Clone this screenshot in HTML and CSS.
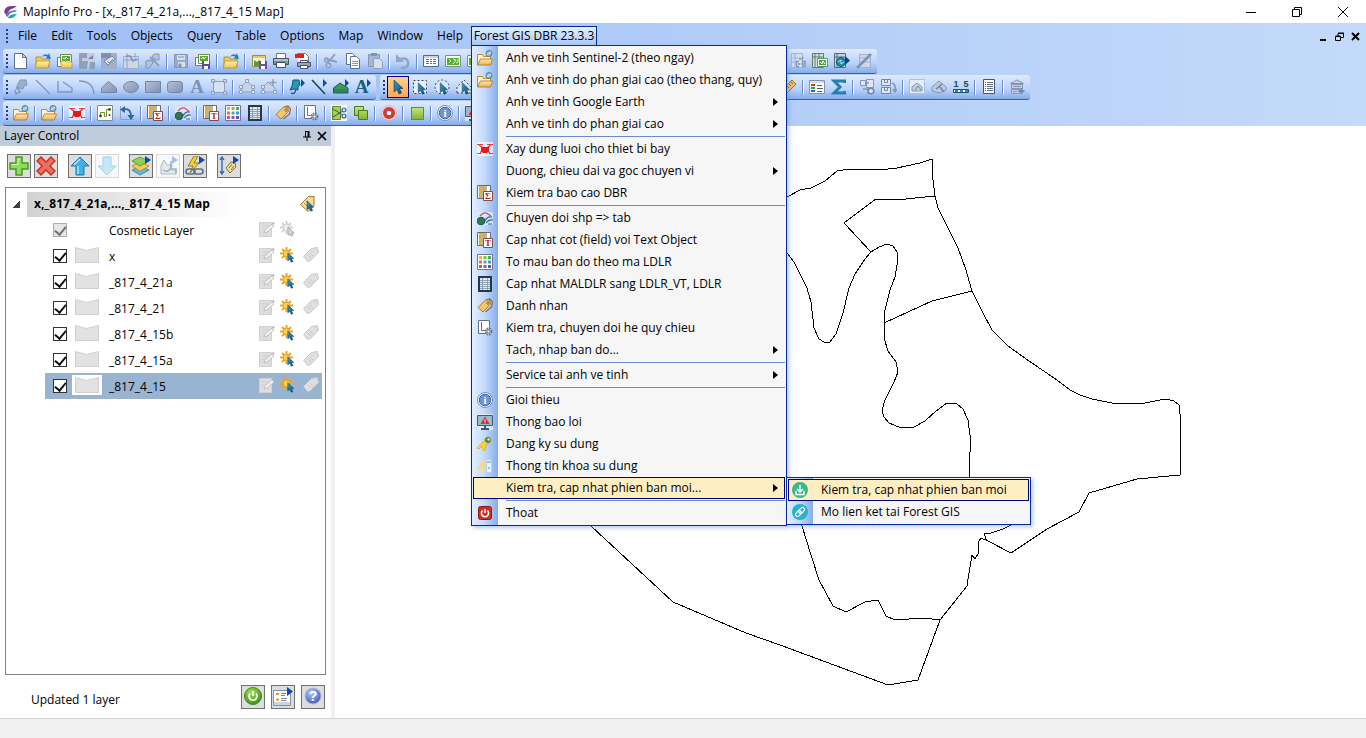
FILE: index.html
```html
<!DOCTYPE html>
<html lang="vi">
<head>
<meta charset="utf-8">
<title>MapInfo Pro - [x,_817_4_21a,...,_817_4_15 Map]</title>
<link rel="stylesheet" href="styles.css">
</head>
<body>
<svg class="defs" aria-hidden="true">
<defs>
<linearGradient id="g-gold" x1="0" y1="0" x2="0" y2="1"><stop offset="0" stop-color="#fff6a8"/><stop offset="1" stop-color="#ecc24a"/></linearGradient>
<linearGradient id="g-orange" x1="0" y1="0" x2="0" y2="1"><stop offset="0" stop-color="#ffe6b4"/><stop offset="1" stop-color="#eeb258"/></linearGradient>
<linearGradient id="g-teal" x1="0" y1="0" x2="1" y2="1"><stop offset="0" stop-color="#3aa0c4"/><stop offset="1" stop-color="#0d4a6e"/></linearGradient>
<linearGradient id="g-gray" x1="0" y1="0" x2="1" y2="1"><stop offset="0" stop-color="#b4c2da"/><stop offset="1" stop-color="#7f90b0"/></linearGradient>
<linearGradient id="g-green" x1="0" y1="0" x2="0" y2="1"><stop offset="0" stop-color="#c4e67c"/><stop offset="1" stop-color="#7fb431"/></linearGradient>
<radialGradient id="g-ball" cx=".4" cy=".3" r=".8"><stop offset="0" stop-color="#a8e05a"/><stop offset="1" stop-color="#2f8a10"/></radialGradient>
<radialGradient id="g-blueball" cx=".4" cy=".3" r=".8"><stop offset="0" stop-color="#b4c8f8"/><stop offset="1" stop-color="#3450b4"/></radialGradient>
</defs>
<symbol id="cursor" viewBox="0 0 16 16"><path d="M4 1v12l3-2.500 2 4.500 2.500-1-2-4.500h3.500z" fill="url(#g-teal)" stroke="#0d3550" stroke-width=".6"/></symbol>
<symbol id="new" viewBox="0 0 16 16"><path d="M1.500.500h8l4 4v11h-12z" fill="#fff" stroke="#5c7390"/><path d="M9.500.500v4h4z" fill="#c9d6e8" stroke="#5c7390"/></symbol>
<symbol id="open" viewBox="0 0 16 16"><path d="M1 14V4h5l1 2h7v8z" fill="#f0cf58" stroke="#a98024" stroke-width=".8"/><path d="M0 15l2-7h13l-2 7z" fill="url(#g-gold)" stroke="#b98f2c" stroke-width=".8"/><path d="M7 4q2-4 6-2l1-2 2 6-5-.500 1-2q-2-1-5 .500z" fill="#2583b4"/></symbol>
<symbol id="openws" viewBox="0 0 16 16"><path d="M.500 4.500h9v9h-9z" fill="#fff" stroke="#777"/><path d="M3.500 1.500h11v8h-11z" fill="#fff" stroke="#6d8c50"/><path d="M5 3h8v5H5z" fill="#58a832"/><path d="M6 5l2 1 1-2 2 2" stroke="#fff" fill="none"/><path d="M4 15V8h4l1 1h6v6z" fill="url(#g-gold)" stroke="#b98f2c" stroke-width=".7"/></symbol>
<symbol id="gdark1" viewBox="0 0 16 16"><path d="M0 0h16v16H0z" fill="#8f9fbc"/><path d="M8 0h8v9h-5l-1 7H8l1-8H3V5h5z" fill="#c3cfe2"/><path d="M9 6l5-4v4z" fill="#7485a5"/></symbol>
<symbol id="gdark2" viewBox="0 0 16 16"><path d="M0 0h16v16H0z" fill="#9fb0cb"/><path d="M0 0h10v5H0z" fill="#7f90b0"/><path d="M3 8l4 4 7-6-3-3z" fill="#dde6f3" stroke="#7384a5"/><path d="M6 8l2 2 4-4" stroke="#7384a5" fill="none"/></symbol>
<symbol id="gtable" viewBox="0 0 16 16"><path d="M.500 3.500h15v12H.500z" fill="#ccd7e8" stroke="#9fb0cb"/><path d="M4 0v16M12 0v5M1 7h14" stroke="#92a3c0"/><path d="M3 3h4l3 5 4-2" stroke="#8192b1" fill="none" stroke-width="1.500"/></symbol>
<symbol id="gtools" viewBox="0 0 16 16"><path d="M2 14L11 5M14 13L5 4" stroke="#8fa0be" stroke-width="2"/><path d="M9 1h5v6h-3l-4-3zM1 8l5-1 2 3-4 5H1z" fill="#b6c4da" stroke="#8495b4"/></symbol>
<symbol id="gsave" viewBox="0 0 16 16"><path d="M1.500 1.500h13v13h-13z" fill="#9aabc8" stroke="#8495b4"/><path d="M4 2h8v5H4zM5 9h7v5H5z" fill="#d6e0ee"/><path d="M5 4h6M6 11h2v3H6z" stroke="#8495b4" fill="#8495b4"/></symbol>
<symbol id="savews" viewBox="0 0 16 16"><path d="M.500 4.500h9v8h-9z" fill="#fff" stroke="#777"/><path d="M3.500 1.500h11v9h-11z" fill="#fff" stroke="#6d8c50"/><path d="M5 3h8v5H5z" fill="#58a832"/><path d="M6 6l2-2 1 2 2-2" stroke="#fff" fill="none"/><path d="M7 8h8v8H7z" fill="#574a9b"/><path d="M9 8h5v3H9zM9 13h4v3H9z" fill="#fff"/></symbol>
<symbol id="savewin" viewBox="0 0 16 16"><path d="M1.500 2.500h13v11h-13z" fill="#fff5d4" stroke="#a58a48"/><path d="M2 3h12v2H2z" fill="#e4c674"/><path d="M3 7l3 2 2-2 3 3v3H3z" fill="#4fa03c"/><path d="M8 8h8v8H8z" fill="#6c50a0"/><path d="M10 8h4v3h-4zM10 13h4v3h-4z" fill="#fff"/></symbol>
<symbol id="print" viewBox="0 0 16 16"><path d="M3.500 5V.500h9V5" fill="#fff" stroke="#6b7687"/><path d="M.500 5.500h15v6H.500z" fill="#7d899b" stroke="#465264"/><path d="M1 6h14v2H1z" fill="#b2bfd0"/><path d="M3.500 9.500h9v5h-9z" fill="#fff" stroke="#465264"/><path d="M12 9h3" stroke="#4fd04a" stroke-width="1.500"/></symbol>
<symbol id="pdf" viewBox="0 0 16 16"><path d="M2.500 4V.500h8l3 3V15h-8" fill="#fff" stroke="#777"/><path d="M0 1h9v4H0z" fill="#dc2020"/><path d="M2.500 9.500h13v4h-13z" fill="#9aa6b7" stroke="#465264"/><path d="M5.500 7.500h7v2h-7zM5.500 12.500h7v3h-7z" fill="#fff" stroke="#465264"/></symbol>
<symbol id="gcut" viewBox="0 0 16 16"><path d="M12 1L5 10M3 6l11 3" stroke="#8fa0be" stroke-width="2"/><circle cx="3.500" cy="7" r="2" fill="none" stroke="#8fa0be" stroke-width="1.500"/><circle cx="5.500" cy="12.500" r="2.300" fill="none" stroke="#8fa0be" stroke-width="1.500"/></symbol>
<symbol id="copy" viewBox="0 0 16 16"><path d="M1.500.500h6l3 3v8h-9z" fill="#fff" stroke="#5c7390"/><path d="M5.500 3.500h6l3 3v9h-9z" fill="#fff" stroke="#5c7390"/><path d="M7 8.500h6M7 10.500h6M7 12.500h6" stroke="#8aa0bd"/></symbol>
<symbol id="gpaste" viewBox="0 0 16 16"><path d="M1.500 1.500h11v12h-11z" fill="#a8b7d0" stroke="#8495b4"/><path d="M4 0h6v3H4z" fill="#8495b4"/><path d="M6.500 5.500h6l3 3v7h-9z" fill="#d6e0ee" stroke="#8fa0be"/></symbol>
<symbol id="gundo" viewBox="0 0 16 16"><path d="M6 15q8 0 7-6-1-5-8-3" fill="none" stroke="#93a5c4" stroke-width="2.500"/><path d="M1 1v8h8z" fill="#93a5c4"/></symbol>
<symbol id="browser" viewBox="0 0 16 16"><path d="M.500 2.500h15v11H.500z" fill="#fff" stroke="#4d6c8c"/><path d="M1 3h14v2H1z" fill="#c2d5ea"/><path d="M3 6.500h3M7 6.500h2M10 6.500h3M3 8.500h3M7 8.500h2M10 8.500h3M3 10.500h3M7 10.500h2M10 10.500h3" stroke="#4a7cae"/></symbol>
<symbol id="mapwin" viewBox="0 0 16 16"><path d="M.500 2.500h15v11H.500z" fill="#fff" stroke="#7c8f80"/><path d="M2 5h12v7H2z" fill="#54b032"/><path d="M4 6l2 2-2 2M8 6l3 1-3 4M13 6v3l-2 1" stroke="#e4f6dc" fill="none"/></symbol>
<symbol id="gpin" viewBox="0 0 16 16"><path d="M7 1h6l1 5-3 1-1 3-4-1-3 1 2-5z" fill="#9eafcc" stroke="#8596b5"/><path d="M4 8l3 5-4 2-1-4" fill="none" stroke="#8596b5" stroke-width="1.500"/></symbol>
<symbol id="gline" viewBox="0 0 16 16"><path d="M1 1l14 14" stroke="#8596b5" stroke-width="1.300"/></symbol>
<symbol id="gpoly" viewBox="0 0 16 16"><path d="M1 2v11h14V9L6 3" stroke="#8596b5" stroke-width="1.300" fill="none"/></symbol>
<symbol id="garc" viewBox="0 0 16 16"><path d="M0 2q14 0 15 13" stroke="#8596b5" stroke-width="1.300" fill="none"/></symbol>
<symbol id="gpent" viewBox="0 0 16 16"><path d="M.500 9L7.500 2.500l8 6.500v4.500h-15z" fill="url(#g-gray)" stroke="#7485a5"/></symbol>
<symbol id="gell" viewBox="0 0 16 16"><ellipse cx="8" cy="8" rx="7.500" ry="5.500" fill="url(#g-gray)" stroke="#7485a5"/></symbol>
<symbol id="grect" viewBox="0 0 16 16"><path d="M.500 2.500h15v11H.500z" fill="url(#g-gray)" stroke="#7485a5"/></symbol>
<symbol id="grrect" viewBox="0 0 16 16"><rect x=".500" y="2.500" width="15" height="11" rx="3" fill="url(#g-gray)" stroke="#7485a5"/></symbol>
<symbol id="gframe" viewBox="0 0 16 16"><path d="M2.500 2.500h11v11h-11z" fill="#d5e2f5" stroke="#8fa0be"/><path d="M.500.500h3v3h-3zM12.500.500h3v3h-3zM.500 12.500h3v3h-3zM12.500 12.500h3v3h-3z" fill="#c4d2e8" stroke="#8fa0be"/></symbol>
<symbol id="greshape" viewBox="0 0 16 16"><path d="M2 13V8l6-6 6 6v5z" fill="#c4d4ec" stroke="#8fa0be"/><path d="M.500 11.500h3v3h-3zM12.500 11.500h3v3h-3zM.500 6.500h3v3h-3zM12.500 6.500h3v3h-3zM6.500.500h3v3h-3z" fill="#dbe6f5" stroke="#8fa0be"/></symbol>
<symbol id="gaddnode" viewBox="0 0 16 16"><path d="M2 13V8l5-5 7 6v4z" fill="#c4d4ec" stroke="#8fa0be"/><path d="M.500 11.500h3v3h-3zM12.500 11.500h3v3h-3zM.500 6.500h3v3h-3z" fill="#dbe6f5" stroke="#8fa0be"/><path d="M12 0v7M8.500 3.500h7" stroke="#8fa0be" stroke-width="1.500"/></symbol>
<symbol id="pin" viewBox="0 0 16 16"><path d="M4 1h6l1 5-2 2v3l-4-1-4 1 2-4z" fill="#2a95b4" stroke="#0f5c7c"/><path d="M2 14q4 2 5-4" fill="none" stroke="#0f5c7c" stroke-width="1.300"/><path d="M12 0v8l4-4z" fill="#0a49b0"/></symbol>
<symbol id="line" viewBox="0 0 16 16"><path d="M1 1l13 14" stroke="#154a63" stroke-width="1.600"/><path d="M12 0v8l4-4z" fill="#0a49b0"/></symbol>
<symbol id="region" viewBox="0 0 16 16"><path d="M.500 14V9L7 4l8 5v5z" fill="#3f9a50" stroke="#155a6c"/><path d="M1 14v-4h14v4z" fill="#1b6b73" opacity=".5"/><path d="M12 0v8l4-4z" fill="#0a49b0"/></symbol>
<symbol id="more-mark" viewBox="0 0 16 16"><path d="M12 0v8l4-4z" fill="#0a49b0"/></symbol>
<symbol id="selrect" viewBox="0 0 16 16"><path d="M1.500 1.500h13v13h-13z" fill="#e5f0ff" stroke="#33465e" stroke-dasharray="2 2"/><use href="#cursor" x="3" y="3" width="13" height="13"/></symbol>
<symbol id="selcirc" viewBox="0 0 16 16"><circle cx="8" cy="8" r="7" fill="#d7e8fb" stroke="#33465e" stroke-dasharray="2 2"/><use href="#cursor" x="3" y="3" width="13" height="13"/></symbol>
<symbol id="selpoly" viewBox="0 0 16 16"><path d="M1 14V8l7-7 7 7v6z" fill="#d7e8fb" stroke="#33465e" stroke-dasharray="2 2"/><use href="#cursor" x="3" y="3" width="13" height="13"/></symbol>
<symbol id="gdb" viewBox="0 0 16 16"><path d="M1.500.500h11v14h-11z" fill="#d3deee" stroke="#a4b4ce"/><path d="M2 5h10M2 9h4M5 1v13" stroke="#a4b4ce"/><path d="M9 8.500H6.500v5H9M12 8.500h3v5h-3M8 11h2M11 11h3M10 5v2M13 4l-1 3" fill="none" stroke="#8596b5" stroke-width="1.400"/></symbol>
<symbol id="dbmap" viewBox="0 0 16 16"><path d="M.500.500h11v14H.500z" fill="#d6e3d9" stroke="#5d7d6b"/><path d="M0 4h11M3 0v14M7 0v5" stroke="#5d7d6b"/><path d="M5.500 5.500h10v8h-10z" fill="#fff" stroke="#58a078"/><path d="M7 7h7v5H7z" fill="#4cae28"/><path d="M8 9l2 2 1-3 2 3" stroke="#fff" fill="none"/></symbol>
<symbol id="dblink" viewBox="0 0 16 16"><path d="M.500.500h11v14H.500z" fill="#c5d5da" stroke="#4d6d7b"/><path d="M0 4h11M3 0v14" stroke="#4d6d7b"/><circle cx="7" cy="9" r="4.500" fill="#1f8db0" stroke="#0a5478"/><path d="M4 9l3-2v4l3-2" stroke="#bfe6f0" fill="none"/><path d="M11 3v9l5-4.500z" fill="#0a3f9c"/></symbol>
<symbol id="gslash" viewBox="0 0 16 16"><path d="M3.500 1.500h11v13h-11z" fill="#cdd9ea" stroke="#9fb0cb"/><path d="M4 5h10M4 9h10" stroke="#9fb0cb"/><path d="M1 15L15 1" stroke="#8192b1" stroke-width="2.500"/></symbol>
<symbol id="ruler" viewBox="0 0 16 16"><path d="M1 11L11 1l4 4L5 15z" fill="#f2c25c" stroke="#a5711e"/><path d="M4 9l2 2M6 7l2 2M8 5l2 2M10 3l2 2" stroke="#8d5e15"/></symbol>
<symbol id="legend" viewBox="0 0 16 16"><path d="M.500 1.500h15v13H.500z" fill="#fff" stroke="#8393a8"/><path d="M1 2h14v2H1z" fill="#d1deee"/><path d="M2 5h4v2H2z" fill="#e03020"/><path d="M2 8h4v2H2z" fill="#2fa33c"/><path d="M2 11h4v2H2z" fill="#2d5fd0"/><path d="M8 6.500h5M8 9.500h6M8 12.500h5" stroke="#4d5d70"/></symbol>
<symbol id="sigma" viewBox="0 0 16 16"><path d="M13.500 4V2H3l6 6-6 6h10.500v-2" fill="none" stroke="#2580ae" stroke-width="3"/></symbol>
<symbol id="gsnap" viewBox="0 0 16 16"><path d="M1.500 1.500h5v5h-5zM7.500.500h7v8h-7z" fill="#dde8f6" stroke="#8596b5"/><path d="M4 10h5v5M10 4H6" stroke="#8596b5" fill="none" stroke-width="1.500"/><circle cx="12" cy="12" r="2.800" fill="#dde8f6" stroke="#7485a5" stroke-width="1.500"/></symbol>
<symbol id="gswap" viewBox="0 0 16 16"><path d="M.500.500h9v6h-9zM.500 8.500h9v6h-9zM3.500.500h3v3h-3zM3.500 8.500h3v3h-3z" fill="#dde8f6" stroke="#7485a5"/><path d="M11 4q4 1 3 8M12 10l2 3 2-3" stroke="#8596b5" fill="none" stroke-width="1.500"/></symbol>
<symbol id="gwin" viewBox="0 0 16 16"><path d="M.500.500h15v14H.500z" fill="#e3edf9" stroke="#b0bfd7"/><path d="M3 12V8l5-4 5 4v4z" fill="#c1cfe4" stroke="#8596b5"/><path d="M6 11l3-4 3 4" fill="none" stroke="#7485a5"/></symbol>
<symbol id="ghouse" viewBox="0 0 16 16"><path d="M1 8l7-6 7 6v3l-7 3-7-2z" fill="#bccbe2" stroke="#8596b5"/><path d="M5 10l6-5M8 7l5 6" stroke="#7485a5" stroke-width="1.500"/></symbol>
<symbol id="scale" viewBox="0 0 16 16"><path d="M.500 10.500h15v3H.500z" fill="#fff" stroke="#0f5a70"/><path d="M2 12h3M7 12h3M12 12h3" stroke="#0f5a70" stroke-width="1.500"/></symbol>
<symbol id="listdoc" viewBox="0 0 16 16"><path d="M2.500.500h11v14h-11z" fill="#fff" stroke="#3f5672"/><path d="M4 3.500h1M4 5.500h1M4 7.500h1M4 9.500h1M4 11.500h1" stroke="#c33"/><path d="M6 3.500h6M6 5.500h6M6 7.500h6M6 9.500h6M6 11.500h6" stroke="#5d6f86"/></symbol>
<symbol id="gbank" viewBox="0 0 16 16"><path d="M1.500 4.500L8 1l6.500 3.500zM2.500 5.500h11v4h-11zM2.500 10.500h8v4h-8z" fill="#c5d2e6" stroke="#8596b5"/><path d="M4 7.500h8M4 12.500h4" stroke="#8596b5"/><path d="M12.500 9v6M9.500 12h6" stroke="#7485a5" stroke-width="2"/></symbol>
<symbol id="folder" viewBox="0 0 16 16"><path d="M.500 14.500V4.500h5l1 2h7v8z" fill="#fff3cf" stroke="#c48a32"/><path d="M.500 15l3-6h12l-2 6z" fill="url(#g-orange)" stroke="#b57a22" stroke-width=".9"/><circle cx="12" cy="3.500" r="3" fill="#8fbbd0" stroke="#4b7f98"/><path d="M10 5l4-3" stroke="#e9f6fa"/></symbol>
<symbol id="drone" viewBox="0 0 16 16"><path d="M0 1h16v14H0z" fill="#fff" opacity=".6"/><path d="M0 3.500h6M10 3.500h6M0 12.500h4M12 12.500h4" stroke="#f04040" stroke-width="1.200"/><path d="M2 4l4 3-3 6M14 4l-4 3 3 6" stroke="#f03a3a" stroke-width="1.500" fill="none"/><path d="M4 6h8v4l-2 2H6l-2-2z" fill="#e81818"/></symbol>
<symbol id="route" viewBox="0 0 16 16"><path d="M.500.500h15v15H.500z" fill="#fff" stroke="#7f8c9a"/><path d="M3.500 11V7.500h4v4h2V4.500h3" fill="none" stroke="#6f8f2a"/><circle cx="3.500" cy="11" r="1.400" fill="#3b4f20"/><circle cx="12.500" cy="4.500" r="1.400" fill="#3b4f20"/><circle cx="12.500" cy="10" r="1" fill="#3b4f20"/></symbol>
<symbol id="turn" viewBox="0 0 16 16"><path d="M1.500 1v13.500H15" stroke="#90a2b5" fill="none"/><path d="M4 4.500q8-2 8 7" fill="none" stroke="#2b669c" stroke-width="1.700"/><path d="M1 4.500l5-3.500v7zM8.500 10l3.500 5 3.500-5z" fill="#2b669c"/></symbol>
<symbol id="columns" viewBox="0 0 16 16"><path d="M.500.500h13v13H.500z" fill="#fff" stroke="#6f6a66"/><path d="M2 1h2v12H2zM6 1h2v12H6z" fill="#e5a93e"/><path d="M5 0v13M9 0v13" stroke="#6f6a66"/><path d="M6.500 6.500h9v9h-9z" fill="#fff" stroke="#7c5050"/></symbol>
<symbol id="convert" viewBox="0 0 16 16"><path d="M0 2h16v13H0z" fill="#e3edf6" opacity=".7"/><circle cx="4" cy="11" r="3.800" fill="#2b7a4e" stroke="#23505c"/><path d="M3 6q4-5 8-2l3 2" stroke="#d25060" stroke-width="1.300" fill="none"/><path d="M8 11q2-5 7-4M9 13q3-4 7-3M11 14h4" stroke="#34699a" stroke-width="1.200" fill="none"/></symbol>
<symbol id="palette" viewBox="0 0 16 16"><path d="M.500.500h15v15H.500z" fill="#fff" stroke="#75729a"/><path d="M2 2h3v3H2z" fill="#eab64c"/><path d="M6.500 2h3v3h-3z" fill="#7bc043"/><path d="M11 2h3v3h-3z" fill="#4cae5c"/><path d="M2 6.500h3v3H2z" fill="#e2703c"/><path d="M6.500 6.500h3v3h-3z" fill="#3dae9c"/><path d="M11 6.500h3v3h-3z" fill="#3c9ad0"/><path d="M2 11h3v3H2z" fill="#d84890"/><path d="M6.500 11h3v3h-3z" fill="#9a50b4"/><path d="M11 11h3v3h-3z" fill="#6054b4"/></symbol>
<symbol id="sheet" viewBox="0 0 16 16"><path d="M1 0h14v16H1z" fill="#263746"/><path d="M3 2h10v12H3z" fill="#e2eaf2"/><path d="M3 4.500h10M3 6.500h10M3 8.500h10M3 10.500h10M3 12.500h10M5.500 2v12M10.500 2v12" stroke="#7a93a8" stroke-width=".8"/></symbol>
<symbol id="tag" viewBox="0 0 16 16"><path d="M9 2l4-1 2.500 3-1 5-6 5" fill="none" stroke="#8a6a4a" stroke-width="1.200"/><path d="M1 9.500l7.500-7.500h4l1 4-7.500 8z" fill="#f8c868" stroke="#b07a32" stroke-linejoin="round"/><circle cx="11" cy="5" r="1.200" fill="#fff" stroke="#8a5a20"/></symbol>
<symbol id="setup" viewBox="0 0 16 16"><path d="M1.500.500h11v13h-11z" fill="#fff" stroke="#60758c"/><path d="M4.500 2v8.500H9" fill="none" stroke="#60758c"/><circle cx="11.500" cy="11.500" r="3" fill="#d7e0ec" stroke="#66778f" stroke-width="2" stroke-dasharray="1.600 .8"/><circle cx="11.500" cy="11.500" r="1.500" fill="#fff" stroke="#66778f"/></symbol>
<symbol id="split" viewBox="0 0 16 16"><path d="M0 0h16v16H0z" fill="#fff"/><path d="M1.500 1.500h8v13h-8z" fill="#a8cf58" stroke="#5d8a24"/><path d="M2 4l10 6M2 12l10-6" stroke="#2f5a40"/><circle cx="13" cy="5" r="2" fill="#cfe2f8" stroke="#2e60a8" stroke-width="1.200"/><circle cx="13" cy="11" r="2" fill="#cfe2f8" stroke="#2e60a8" stroke-width="1.200"/></symbol>
<symbol id="merge" viewBox="0 0 16 16"><path d="M1.500 1.500h9v4h4v9h-9v-4h-4z" fill="url(#g-green)" stroke="#4e7a1a"/><path d="M5.500 10V5.500H10" fill="none" stroke="#4e7a1a"/></symbol>
<symbol id="record" viewBox="0 0 16 16"><circle cx="8" cy="8" r="7.500" fill="#f2d6dc" stroke="#d89aa4" stroke-width=".6"/><circle cx="8" cy="8" r="6" fill="#cc3b38"/><circle cx="8" cy="8" r="2.300" fill="#fff"/></symbol>
<symbol id="greensq" viewBox="0 0 16 16"><rect x="2.500" y="2.500" width="12" height="12" fill="url(#g-green)" stroke="#5f8f26"/></symbol>
<symbol id="info" viewBox="0 0 16 16"><circle cx="8" cy="8" r="7.500" fill="#fff" stroke="#7392c8"/><circle cx="8" cy="8" r="5.800" fill="#6f94d4" stroke="#3f65aa"/></symbol>
<symbol id="alertpc" viewBox="0 0 16 16"><path d="M0 0h16v16H0z" fill="#eef3f8" opacity=".7"/><path d="M.500 1.500h15v10H.500z" fill="#9bbad0" stroke="#47586a"/><path d="M8 2.500l4.500 7.500h-9z" fill="#d83030"/><path d="M8 5v3M8 8.500v1" stroke="#ffe9a0"/><path d="M8 12v2M4 15h8" stroke="#47586a" stroke-width="2"/></symbol>
<symbol id="key" viewBox="0 0 16 16"><path d="M8 4l4 3-3 2-1 6-2-1-1-4-3 3-2-1 5-5z" fill="#ffd535" stroke="#d7a418" stroke-width=".7"/><circle cx="11" cy="4" r="3.300" fill="#37787e" stroke="#e4bb29"/><circle cx="11.500" cy="3.500" r="1.200" fill="#d8eee8"/></symbol>
<symbol id="keyinfo" viewBox="0 0 16 16"><path d="M6 2l3 2-2 4 1 6-2 1-2-5-4 2 4-7z" fill="#fbd87a"/><path d="M9.500 1.500h5v13h-5z" fill="#e8f3ff" stroke="#b3d0ee"/><path d="M10 4h4M11 10h2" stroke="#7db4e4" stroke-width="1.500"/></symbol>
<symbol id="power" viewBox="0 0 16 16"><rect x="1.500" y="1.500" width="13" height="13" rx="2" fill="#cf2e24" stroke="#8d1812"/><path d="M5.500 5.500a3.600 3.600 0 1 0 5 0M8 4v4" fill="none" stroke="#fff" stroke-width="1.500"/></symbol>
<symbol id="download" viewBox="0 0 16 16"><circle cx="8" cy="8" r="8" fill="#3db88c"/><path d="M8 3v6M5 7l3 3 3-3M4 9v3.500h8V9" fill="none" stroke="#fff" stroke-width="1.400"/></symbol>
<symbol id="link" viewBox="0 0 16 16"><circle cx="8" cy="8" r="8" fill="#25b2cc"/><g fill="none" stroke="#fff" stroke-width="1.200"><rect x="2.500" y="6" width="6.500" height="4" rx="2" transform="rotate(-45 8 8)"/><rect x="7" y="6" width="6.500" height="4" rx="2" transform="rotate(-45 8 8)"/></g></symbol>
<symbol id="add" viewBox="0 0 20 20"><path d="M7 1h6v6h6v6h-6v6H7v-6H1V7h6z" fill="#8fdc5c" stroke="#449a22" stroke-width="1.500"/><path d="M8.500 3h3M3 8.500h6V3" stroke="#d8f7bd" fill="none"/></symbol>
<symbol id="remove" viewBox="0 0 20 20"><path d="M1 5l4-4 5 5 5-5 4 4-5 5 5 5-4 4-5-5-5 5-4-4 5-5z" fill="#f06c5e" stroke="#c42c22" stroke-width="1.300"/></symbol>
<symbol id="up" viewBox="0 0 20 20"><path d="M10 1l9 9h-5v9H6v-9H1z" fill="#3fb0ea" stroke="#1877b4"/><path d="M8 10v8M10 3L4 9" stroke="#b6e6fb" stroke-width="1.500"/></symbol>
<symbol id="down" viewBox="0 0 20 20"><path d="M10 19l9-9h-5V1H6v9H1z" fill="#c5e8f8" stroke="#a3d3e8"/></symbol>
<symbol id="layers" viewBox="0 0 20 20"><path d="M1 14l8-4 9 4-9 5z" fill="#5fb8dc" stroke="#3a8db4"/><path d="M1 10l8-4 9 4-9 5z" fill="#f6cb58" stroke="#c59423"/><path d="M1 5l8-4 9 4-9 5z" fill="#8fd05a" stroke="#5aa02c"/><path d="M14 0v8l6-4z" fill="#0a49b0"/></symbol>
<symbol id="ghand" viewBox="0 0 20 20"><path d="M3 18V10l3-6 3 5h4v5h5v4z" fill="#e4ebf0" stroke="#a9b9c5"/><path d="M5 14q6 4 9-5M13 5v8h5v5" fill="none" stroke="#9fb2c0" stroke-width="1.500"/><path d="M14 0v8l6-4z" fill="#a9c0e0"/></symbol>
<symbol id="hotlink" viewBox="0 0 20 20"><path d="M9 0L3 10h5l-3 7 9-10H9l4-7z" fill="#f5cf38" stroke="#7d6310" stroke-width=".8"/><rect x="1" y="13" width="9" height="5" rx="2.500" fill="none" stroke="#58708c" stroke-width="1.600"/><rect x="9" y="13" width="9" height="5" rx="2.500" fill="none" stroke="#58708c" stroke-width="1.600"/><path d="M14 0v8l6-4z" fill="#0a49b0"/></symbol>
<symbol id="labels" viewBox="0 0 20 20"><path d="M3 1v17M1 4l2-3 2 3M1 15l2 3 2-3" fill="none" stroke="#2565b8" stroke-width="1.300"/><path d="M7 12l5-6 4 1 1 4-6 6z" fill="#f0dda2" stroke="#83713c"/><path d="M10 12l3-4M12 14l3-4" stroke="#83713c"/><path d="M14 0v8l6-4z" fill="#0a49b0"/></symbol>
<symbol id="poly" viewBox="0 0 24 16"><path d="M.500.500l11 3L23.500.500v15H.500z" fill="#e2e2e2" stroke="#cfcfcf"/></symbol>
<symbol id="edit" viewBox="0 0 16 16"><path d="M.500 1.500h12v14H.500z" fill="#dedede" stroke="#d0d0d0"/><path d="M3 5h7M3 8h7M3 11h7" stroke="#cfcfcf"/><path d="M5 12l1-3 7-6 2 2-7 6z" fill="#f4f4f4" stroke="#c2c2c2"/><path d="M13.500 1.500l1.500 1.500" stroke="#b4b4b4" stroke-width="2"/></symbol>
<symbol id="sun" viewBox="0 0 16 16"><path d="M6.500 0v13M0 6.500h13M2 2l9 9M11 2l-9 9" stroke="#eda52c" stroke-width="2"/><circle cx="6.500" cy="6.500" r="3.500" fill="#ffcf50" stroke="#e8962a"/><use href="#cursor" x="5" y="5" width="11" height="11"/></symbol>
<symbol id="gsun" viewBox="0 0 16 16"><path d="M6.500 0v13M0 6.500h13M2 2l9 9M11 2l-9 9" stroke="#d3d3d3" stroke-width="2"/><circle cx="6.500" cy="6.500" r="3.500" fill="#eee" stroke="#ccc"/><path d="M8 6v8l2-1 1 2 2-1-1-2h2z" fill="#d7d7d7" stroke="#aaa"/></symbol>
<symbol id="gtag" viewBox="0 0 16 16"><path d="M.500 9.500l8-8 6-1 1 5-8 8-3 1z" fill="#e0e0e0" stroke="#c8c8c8" stroke-linejoin="round"/><path d="M5 8l3 3M7 6l3 3" stroke="#c4c4c4"/><circle cx="12.500" cy="3.500" r="1" fill="#fff" stroke="#bbb" stroke-width=".6"/></symbol>
<symbol id="maptag" viewBox="0 0 16 16"><path d="M.500 8.500l8-8h5.500v9l-6 6z" fill="#f6dc96" stroke="#9a7a36" stroke-linejoin="round"/><path d="M4 7l4 4M6 5l3 3" stroke="#b4924c"/><use href="#cursor" x="4" y="4" width="12" height="12"/></symbol>
<symbol id="on" viewBox="0 0 20 20"><circle cx="10" cy="9" r="8.500" fill="url(#g-ball)" stroke="#3b8c18"/><path d="M7 6.500a4 4 0 1 0 6 0M10 4v5" fill="none" stroke="#fff" stroke-width="1.800"/></symbol>
<symbol id="opts" viewBox="0 0 20 20"><path d="M.500 3.500h17v15H.500z" fill="#fff" stroke="#7c93b4"/><path d="M1 15h16v3H1z" fill="#c7d5e6"/><path d="M3 7h3M3 12.500h3" stroke="#e39a2c" stroke-width="2"/><path d="M8 6.500h5M8 8.500h4M8 11.500h6M8 13.500h5" stroke="#7d8694"/><path d="M14 0v9l6-4.500z" fill="#0a49b0"/></symbol>
<symbol id="help" viewBox="0 0 20 20"><circle cx="10" cy="9" r="8" fill="url(#g-blueball)" stroke="#a9b8e4"/></symbol>
<symbol id="logo" viewBox="0 0 14 14"><path d="M0 7Q1 1 7 1h6l-3 2Q4 4 3 11z" fill="#7d3c9c"/><path d="M2 11q1-6 11-6l-2 2Q5 7 4 12z" fill="#4a7fc4"/><path d="M4 13q1-4 9-4l-3 3q-3 2-6 1z" fill="#20a8a8"/></symbol>
</svg>

<header class="titlebar">
  <svg class="logo" aria-hidden="true"><use href="#logo"/></svg>
  <h1>MapInfo Pro - [x,_817_4_21a,...,_817_4_15 Map]</h1>
  <div class="window-controls">
    <button aria-label="Minimize"><svg viewBox="0 0 12 12"><path d="M1 6.500h10"/></svg></button>
    <button aria-label="Restore"><svg viewBox="0 0 12 12"><path d="M1.500 3.500h7v7h-7zM3.500 3V1.500h7v7H9"/></svg></button>
    <button aria-label="Close"><svg viewBox="0 0 12 12"><path d="M1 1l10 10M11 1L1 11"/></svg></button>
  </div>
</header>

<div class="chrome">
  <nav class="menubar" aria-label="Menu">
    <span class="grip"></span>
    <div class="menus">
      <button>File</button><button>Edit</button><button>Tools</button><button>Objects</button><button>Query</button><button>Table</button><button>Options</button><button>Map</button><button>Window</button><button>Help</button>
    </div>
    <div class="open-menu">
      <button class="tab" aria-expanded="true">Forest GIS DBR 23.3.3</button>
      <div class="dropdown">
        <button class="item"><svg><use href="#folder"/></svg>Anh ve tinh Sentinel-2 (theo ngay)</button>
        <button class="item"><svg><use href="#folder"/></svg>Anh ve tinh do phan giai cao (theo thang, quy)</button>
        <button class="item more"><svg></svg>Anh ve tinh Google Earth</button>
        <button class="item more"><svg></svg>Anh ve tinh do phan giai cao</button>
        <hr>
        <button class="item"><svg><use href="#drone"/></svg>Xay dung luoi cho thiet bi bay</button>
        <button class="item more"><svg></svg>Duong, chieu dai va goc chuyen vi</button>
        <button class="item"><svg viewBox="0 0 16 16"><use href="#columns"/><text x="11" y="14" class="mark">Σ</text></svg>Kiem tra bao cao DBR</button>
        <hr>
        <button class="item"><svg><use href="#convert"/></svg>Chuyen doi shp =&gt; tab</button>
        <button class="item"><svg viewBox="0 0 16 16"><use href="#columns"/><text x="11" y="14" class="mark">T</text></svg>Cap nhat cot (field) voi Text Object</button>
        <button class="item"><svg><use href="#palette"/></svg>To mau ban do theo ma LDLR</button>
        <button class="item"><svg><use href="#sheet"/></svg>Cap nhat MALDLR sang LDLR_VT, LDLR</button>
        <button class="item"><svg><use href="#tag"/></svg>Danh nhan</button>
        <button class="item"><svg><use href="#setup"/></svg>Kiem tra, chuyen doi he quy chieu</button>
        <button class="item more"><svg></svg>Tach, nhap ban do...</button>
        <hr>
        <button class="item more"><svg></svg>Service tai anh ve tinh</button>
        <hr>
        <button class="item"><svg viewBox="0 0 16 16"><use href="#info"/><text x="8" y="12" class="info-mark">i</text></svg>Gioi thieu</button>
        <button class="item"><svg><use href="#alertpc"/></svg>Thong bao loi</button>
        <button class="item"><svg><use href="#key"/></svg>Dang ky su dung</button>
        <button class="item"><svg><use href="#keyinfo"/></svg>Thong tin khoa su dung</button>
        <div class="branch">
          <button class="item more active"><svg></svg>Kiem tra, cap nhat phien ban moi...</button>
          <div class="dropdown submenu">
            <button class="item active"><svg><use href="#download"/></svg>Kiem tra, cap nhat phien ban moi</button>
            <button class="item"><svg><use href="#link"/></svg>Mo lien ket tai Forest GIS</button>
          </div>
        </div>
        <hr>
        <button class="item"><svg><use href="#power"/></svg>Thoat</button>
      </div>
    </div>
    <div class="child-controls">
      <button aria-label="Minimize map"><svg viewBox="0 0 9 9"><path d="M1 8h6" stroke-width="2"/></svg></button>
      <button aria-label="Restore map"><svg viewBox="0 0 9 9"><path d="M.500 4.500h5v4h-5zM3 4V1.500h5.500v4H6M.500 4h5M3 1h6"/></svg></button>
      <button aria-label="Close map"><svg viewBox="0 0 9 9"><path d="M1 1l7 7M8 1L1 8" stroke-width="2"/></svg></button>
    </div>
  </nav>

  <div class="toolbar-row">
    <div class="toolbar">
      <span class="grip"></span>
      <button aria-label="New"><svg><use href="#new"/></svg></button>
      <button aria-label="Open"><svg><use href="#open"/></svg></button>
      <button aria-label="Open workspace"><svg><use href="#openws"/></svg></button>
      <button aria-label="Open DBMS" disabled><svg><use href="#gdark1"/></svg></button>
      <button aria-label="Refresh" disabled><svg><use href="#gdark2"/></svg></button>
      <button aria-label="Unlink" disabled><svg><use href="#gtable"/></svg></button>
      <button aria-label="Universal tools" disabled><svg><use href="#gtools"/></svg></button>
      <i></i>
      <button aria-label="Save" disabled><svg><use href="#gsave"/></svg></button>
      <button aria-label="Save workspace"><svg><use href="#savews"/></svg></button>
      <i></i>
      <button aria-label="Close all"><svg><use href="#open"/></svg></button>
      <i></i>
      <button aria-label="Save window"><svg><use href="#savewin"/></svg></button>
      <button aria-label="Print"><svg><use href="#print"/></svg></button>
      <button aria-label="Print PDF"><svg><use href="#pdf"/></svg></button>
      <i></i>
      <button aria-label="Cut" disabled><svg><use href="#gcut"/></svg></button>
      <button aria-label="Copy"><svg><use href="#copy"/></svg></button>
      <button aria-label="Paste" disabled><svg><use href="#gpaste"/></svg></button>
      <i></i>
      <button aria-label="Undo" disabled><svg><use href="#gundo"/></svg></button>
      <i></i>
      <button aria-label="New browser"><svg><use href="#browser"/></svg></button>
      <button aria-label="New map"><svg><use href="#mapwin"/></svg></button>
      <button aria-label="New graph"><svg><use href="#mapwin"/></svg></button>
      <span class="spread"></span>
      <button aria-label="DBMS disconnect" disabled><svg><use href="#gdb"/></svg></button>
      <button aria-label="Make mappable"><svg><use href="#dbmap"/></svg></button>
      <button aria-label="Change symbol"><svg><use href="#dblink"/></svg></button>
      <button aria-label="Disconnect" disabled><svg><use href="#gslash"/></svg></button>
    </div>
  </div>

  <div class="toolbar-row">
    <div class="toolbar">
      <span class="grip"></span>
      <button aria-label="Symbol" disabled><svg><use href="#gpin"/></svg></button>
      <button aria-label="Line" disabled><svg><use href="#gline"/></svg></button>
      <button aria-label="Polyline" disabled><svg><use href="#gpoly"/></svg></button>
      <button aria-label="Arc" disabled><svg><use href="#garc"/></svg></button>
      <button aria-label="Polygon" disabled><svg><use href="#gpent"/></svg></button>
      <button aria-label="Ellipse" disabled><svg><use href="#gell"/></svg></button>
      <button aria-label="Rectangle" disabled><svg><use href="#grect"/></svg></button>
      <button aria-label="Rounded rectangle" disabled><svg><use href="#grrect"/></svg></button>
      <button aria-label="Text" class="letter" disabled>A</button>
      <button aria-label="Frame" disabled><svg><use href="#gframe"/></svg></button>
      <i></i>
      <button aria-label="Reshape" disabled><svg><use href="#greshape"/></svg></button>
      <button aria-label="Add node" disabled><svg><use href="#gaddnode"/></svg></button>
      <i></i>
      <button aria-label="Symbol style"><svg><use href="#pin"/></svg></button>
      <button aria-label="Line style"><svg><use href="#line"/></svg></button>
      <button aria-label="Region style"><svg><use href="#region"/></svg></button>
      <button aria-label="Text style" class="letter styled">A<svg><use href="#more-mark"/></svg></button>
    </div>
    <div class="toolbar">
      <span class="grip"></span>
      <button aria-label="Select" class="pressed"><svg><use href="#cursor"/></svg></button>
      <button aria-label="Marquee select"><svg><use href="#selrect"/></svg></button>
      <button aria-label="Radius select"><svg><use href="#selcirc"/></svg></button>
      <button aria-label="Polygon select"><svg><use href="#selpoly"/></svg></button>
      <span class="spread"></span>
      <button aria-label="Ruler"><svg><use href="#ruler"/></svg></button>
      <i></i>
      <button aria-label="Legend"><svg><use href="#legend"/></svg></button>
      <button aria-label="Statistics"><svg><use href="#sigma"/></svg></button>
      <i></i>
      <button aria-label="Set target" disabled><svg><use href="#gsnap"/></svg></button>
      <button aria-label="Assign selected" disabled><svg><use href="#gswap"/></svg></button>
      <i></i>
      <button aria-label="Clip region" disabled><svg><use href="#gwin"/></svg></button>
      <button aria-label="Set clip region" disabled><svg><use href="#ghouse"/></svg></button>
      <button aria-label="Scale bar"><svg viewBox="0 0 16 16"><use href="#scale"/><text x="3" y="8" class="digit">1</text><text x="13" y="8" class="digit">5</text></svg></button>
      <i></i>
      <button aria-label="Tool manager"><svg><use href="#listdoc"/></svg></button>
      <i></i>
      <button aria-label="Catalog" disabled><svg><use href="#gbank"/></svg></button>
    </div>
  </div>

  <div class="toolbar-row">
    <div class="toolbar">
      <span class="grip"></span>
      <button aria-label="Sentinel-2"><svg><use href="#folder"/></svg></button><i></i>
      <button aria-label="High resolution"><svg><use href="#folder"/></svg></button><i></i>
      <button aria-label="Drone grid"><svg><use href="#drone"/></svg></button><i></i>
      <button aria-label="Route"><svg><use href="#route"/></svg></button>
      <button aria-label="Turn angle"><svg><use href="#turn"/></svg></button><i></i>
      <button aria-label="Check report"><svg viewBox="0 0 16 16"><use href="#columns"/><text x="11" y="14" class="mark">Σ</text></svg></button><i></i>
      <button aria-label="Convert"><svg><use href="#convert"/></svg></button><i></i>
      <button aria-label="Update column"><svg viewBox="0 0 16 16"><use href="#columns"/><text x="11" y="14" class="mark">T</text></svg></button>
      <button aria-label="Colour map"><svg><use href="#palette"/></svg></button>
      <button aria-label="Update codes"><svg><use href="#sheet"/></svg></button><i></i>
      <button aria-label="Label"><svg><use href="#tag"/></svg></button><i></i>
      <button aria-label="Projection"><svg><use href="#setup"/></svg></button><i></i>
      <button aria-label="Split"><svg><use href="#split"/></svg></button>
      <button aria-label="Merge"><svg><use href="#merge"/></svg></button><i></i>
      <button aria-label="Record"><svg><use href="#record"/></svg></button><i></i>
      <button aria-label="Area"><svg><use href="#greensq"/></svg></button><i></i>
      <button aria-label="About"><svg viewBox="0 0 16 16"><use href="#info"/><text x="8" y="12" class="info-mark">i</text></svg></button><i></i>
      <button aria-label="Report error"><svg><use href="#alertpc"/></svg></button>
      <button aria-label="Register"><svg><use href="#key"/></svg></button>
    </div>
  </div>
</div>

<main class="workspace">
  <aside class="layer-panel">
    <header class="panel-head">
      <h2>Layer Control</h2>
      <button aria-label="Auto hide"><svg viewBox="0 0 10 10"><path d="M3 .500h4M3.500 0v6M1 6h8M5 6v4"/><path d="M6.500 0v6" stroke-width="2"/></svg></button>
      <button aria-label="Close panel"><svg viewBox="0 0 10 10"><path d="M1 1l8 8M9 1L1 9" stroke-width="1.700"/></svg></button>
    </header>
    <div class="panel-tools">
      <div><button aria-label="Add layers"><svg><use href="#add"/></svg></button><button aria-label="Remove layer"><svg><use href="#remove"/></svg></button></div>
      <div><button aria-label="Move up"><svg><use href="#up"/></svg></button><button aria-label="Move down" disabled><svg><use href="#down"/></svg></button></div>
      <div><button aria-label="Layer properties"><svg><use href="#layers"/></svg></button><button aria-label="Theme properties" disabled><svg><use href="#ghand"/></svg></button><button aria-label="HotLinks"><svg><use href="#hotlink"/></svg></button></div>
      <div><button aria-label="Label options"><svg><use href="#labels"/></svg></button></div>
    </div>
    <section class="tree">
      <div class="tree-head">
        <span class="twisty"></span>
        <strong>x,_817_4_21a,...,_817_4_15 Map</strong>
        <svg><use href="#maptag"/></svg>
      </div>
      <div class="row"><input type="checkbox" id="l0" checked disabled><span class="swatch"></span><label for="l0">Cosmetic Layer</label><svg><use href="#edit"/></svg><svg><use href="#gsun"/></svg><svg></svg></div>
      <div class="row"><input type="checkbox" id="l1" checked><span class="swatch"><svg><use href="#poly"/></svg></span><label for="l1">x</label><svg><use href="#edit"/></svg><svg><use href="#sun"/></svg><svg><use href="#gtag"/></svg></div>
      <div class="row"><input type="checkbox" id="l2" checked><span class="swatch"><svg><use href="#poly"/></svg></span><label for="l2">_817_4_21a</label><svg><use href="#edit"/></svg><svg><use href="#sun"/></svg><svg><use href="#gtag"/></svg></div>
      <div class="row"><input type="checkbox" id="l3" checked><span class="swatch"><svg><use href="#poly"/></svg></span><label for="l3">_817_4_21</label><svg><use href="#edit"/></svg><svg><use href="#sun"/></svg><svg><use href="#gtag"/></svg></div>
      <div class="row"><input type="checkbox" id="l4" checked><span class="swatch"><svg><use href="#poly"/></svg></span><label for="l4">_817_4_15b</label><svg><use href="#edit"/></svg><svg><use href="#sun"/></svg><svg><use href="#gtag"/></svg></div>
      <div class="row"><input type="checkbox" id="l5" checked><span class="swatch"><svg><use href="#poly"/></svg></span><label for="l5">_817_4_15a</label><svg><use href="#edit"/></svg><svg><use href="#sun"/></svg><svg><use href="#gtag"/></svg></div>
      <div class="row selected"><input type="checkbox" id="l6" checked><span class="swatch"><svg><use href="#poly"/></svg></span><label for="l6">_817_4_15</label><svg><use href="#edit"/></svg><svg><use href="#sun"/></svg><svg><use href="#gtag"/></svg></div>
    </section>
    <footer class="panel-foot">
      <span>Updated 1 layer</span>
      <button aria-label="Auto apply"><svg><use href="#on"/></svg></button>
      <button aria-label="Options"><svg><use href="#opts"/></svg></button>
      <button aria-label="Help"><svg viewBox="0 0 20 20"><use href="#help"/><text x="10" y="14" class="help-mark">?</text></svg></button>
    </footer>
  </aside>
  <section class="map" aria-label="Map">
    <svg viewBox="335 126 1031 592" preserveAspectRatio="xMinYMin slice">
      <g fill="none" stroke="#000" stroke-width="1" shape-rendering="crispEdges">
        <path d="M780 200L787 197L800 190L811 188L825 181L837 171L850 169L879 170L897 168L920 163L932 159L933 180L935 196L938 208L948 228L958 248L966 270L972 291L982 311L992 330L1008 346L1029 361L1057 380L1070 390L1080 395L1092 399L1112 403L1145 403L1160 400L1166 399L1174 401L1179 405L1181 422L1180 440L1180 475L1137 479L1089 493L1079 512L1047 529L1011 553L988 541L981 538L978 543L979 552L975 559L972 555L969 573L967 586L940 620L918 680L888 685L780 645L746 633L673 602L591 526L570 505"/>
        <path d="M780 246L787 253L794 262L807 288L811 302L814 328L819 339L824 342L830 342L836 334L843 313L849 288L855 274L865 259L871 252L879 247L887 244L893 246L897 252L897 265L895 277L890 290L885 310L884 323L884 338L888 351L896 362L898 372L894 382L885 400L882 410L884 417L889 423L901 428L914 427L925 421L936 411L947 403L956 403L963 409L968 420L970 435L970 452L969 465L970 480"/>
        <path d="M935 196L896 200L876 199L844 223L871 252M884 323L932 301L972 291"/>
        <path d="M800 520L802 526L811 555L819 580L833 606L846 612L865 602L878 600L886 616L895 620L924 618L940 620M1015 522L1011 525L1003 529L991 533L984 534L987 541"/>
      </g>
    </svg>
  </section>
</main>
<footer class="statusbar"></footer>
</body>
</html>
```
FILE: styles.css
```css
* { box-sizing: border-box; }
html, body { height: 100%; }
body {
  margin: 0;
  display: flex;
  flex-direction: column;
  background: #fff;
  color: #000;
  font: 12px/16px "Open Sans", "Noto Sans", sans-serif;
  overflow: hidden;
}
button {
  margin: 0;
  padding: 0;
  border: 0;
  background: none;
  color: inherit;
  font: inherit;
}
h1, h2 { margin: 0; font-size: 12px; font-weight: 400; white-space: nowrap; }
svg { display: block; flex: none; }
.defs { position: absolute; width: 0; height: 0; }
.mark { font: 700 9px "Liberation Serif", serif; text-anchor: middle; fill: #c81616; }
.info-mark { font: 700 11px "Liberation Serif", serif; text-anchor: middle; fill: #fff; }
.help-mark { font: 700 14px "Liberation Sans", sans-serif; text-anchor: middle; fill: #fff; }
.digit { font: 700 9px "Liberation Sans", sans-serif; text-anchor: middle; fill: #0f4f68; }

.titlebar { flex: none; display: flex; align-items: center; height: 23px; padding-left: 4px; }
.titlebar h1 { flex: 1; padding-left: 5px; }
.logo { width: 14px; height: 14px; }
.window-controls { display: flex; }
.window-controls button { width: 46px; height: 21px; display: grid; place-items: center; }
.window-controls svg { width: 12px; height: 12px; fill: none; stroke: #000; }

.chrome { flex: none; background: linear-gradient(90deg, #9ebef5, #c4dafa); }
.grip {
  flex: none;
  width: 2px;
  height: 15px;
  background: repeating-linear-gradient(#27417a 0 2px, transparent 2px 4px);
}

.menubar { display: flex; align-items: center; height: 26px; padding-left: 6px; }
.menus { display: flex; justify-content: space-between; width: 445px; margin: 0 8px 0 10px; }
.menus button { height: 20px; }
.open-menu { position: relative; z-index: 5; }
.tab {
  display: block;
  width: 126px;
  height: 20px;
  border: 1px solid #002d96;
  background: linear-gradient(#e3efff, #a9c7f7);
  white-space: nowrap;
}
.dropdown {
  position: absolute;
  top: 19px;
  left: 0;
  width: 316px;
  padding: 1px;
  border: 1px solid #002d96;
  background: linear-gradient(90deg, #e3efff, #c4dbfc 12px, #86aeea 26px, #f6f6f6 26px);
  box-shadow: 2px 2px 4px #6f94e080;
}
.item {
  position: relative;
  display: flex;
  align-items: center;
  width: 100%;
  height: 22px;
  padding: 0 24px 0 3px;
  border: 1px solid transparent;
  text-align: left;
  white-space: nowrap;
}
.item svg { width: 16px; height: 16px; margin-right: 13px; }
.item.active { border-color: #000080; background: #ffeec2; }
.more::after {
  content: "";
  margin-left: auto;
  margin-right: -18px;
  border: 4px solid transparent;
  border-left: 5px solid #000;
  border-right: 0;
}
.dropdown hr { height: 1px; margin: 1px 0 1px 33px; border: 0; background: #6a8ccb; }
.branch { position: relative; }
.submenu { top: 0; left: 313px; width: 245px; }
.child-controls { display: flex; gap: 7px; margin-left: auto; padding-right: 6px; }
.child-controls svg { width: 9px; height: 9px; fill: none; stroke: #000; }

.toolbar-row { display: flex; gap: 4px; padding: 0 0 1px 3px; }
.toolbar {
  display: flex;
  align-items: center;
  height: 25px;
  padding: 0 2px 0 3px;
  border-bottom: 1px solid #3b619c;
  border-radius: 3px;
  background: linear-gradient(#deeafd, #b9d2fa 60%, #86acea);
}
.toolbar-row:last-child { padding-bottom: 0; }
.toolbar .grip { margin-right: 2px; }
.toolbar button { flex: none; width: 22px; height: 22px; display: grid; place-items: center; }
.toolbar svg { width: 16px; height: 16px; }
.toolbar i { flex: none; width: 2px; height: 15px; margin: 0 2px; background: linear-gradient(90deg, #6a8ccb 50%, #f1f9ff 50%); }
.toolbar .pressed { border: 1px solid #000080; background: linear-gradient(#ffd08a, #ffa75c); }
.toolbar .letter { font: 700 19px/22px "Liberation Serif", serif; color: #7f90b0; }
.toolbar .styled { color: #17607c; }
.styled { grid-template-areas: "face"; }
.toolbar .styled svg { grid-area: face; }
.styled::first-line { line-height: 22px; }
.toolbar .styled { display: flex; align-items: center; justify-content: center; }
.toolbar .styled svg { margin-left: -13px; }
.spread { flex: none; width: 301px; }
.toolbar + .toolbar .spread { width: 303px; }

.workspace { flex: 1; display: flex; min-height: 0; }
.layer-panel { flex: none; display: flex; flex-direction: column; width: 335px; border-right: 4px solid #f0f0f0; }
.panel-head { display: flex; align-items: center; gap: 5px; height: 20px; padding: 0 4px; background: #becbda; }
.panel-head h2 { flex: 1; }
.panel-head svg { width: 10px; height: 10px; fill: none; stroke: #000; }
.panel-tools { display: flex; gap: 10px; padding: 8px 7px; }
.panel-tools div { display: flex; gap: 3px; }
.panel-tools button, .panel-foot button {
  width: 24px;
  height: 24px;
  display: grid;
  place-items: center;
  border: 1px solid #707070;
  background: #dddddd;
}
.panel-tools button:disabled { border-color: #d5dbe0; background: #f6f8fa; }
.panel-tools svg, .panel-foot svg { width: 20px; height: 20px; }
.tree { flex: 1; margin: 1px 5px 0 5px; padding: 3px; border: 1px solid #828282; }
.tree-head { display: flex; align-items: center; height: 26px; padding: 0 6px 0 4px; }
.tree-head strong { flex: 1; margin-left: 7px; padding: 4px 7px 5px; background: linear-gradient(90deg, #d2d2d2, #fff 210px); }
.tree-head svg { width: 16px; height: 16px; }
.twisty { width: 7px; height: 7px; background: linear-gradient(135deg, transparent 50%, #404040 50%); }
.row { display: flex; align-items: center; height: 26px; margin-left: 36px; padding: 0 3px 0 8px; }
.row input {
  appearance: none;
  display: grid;
  place-items: center;
  width: 14px;
  height: 14px;
  margin: 0;
  border: 1px solid #333;
  background: #fff;
}
.row input:checked::before {
  content: "";
  width: 5px;
  height: 9px;
  margin-bottom: 3px;
  border: solid #111;
  border-width: 0 2px 2px 0;
  rotate: 40deg;
}
.row input:disabled { border-color: #adadad; background: #e6e6e6; }
.row input:disabled::before { border-color: #6f6f6f; }
.swatch { width: 30px; height: 20px; margin: 0 7px 3px 5px; display: grid; place-items: center; }
.swatch svg { width: 24px; height: 16px; }
.row label { flex: 1; padding-top: 1px; }
.row > svg { width: 16px; height: 16px; margin: 0 0 3px 5px; }
.row > svg:last-child { margin-left: 7px; }
.selected { background: #99b4d1; }
.selected .swatch { background: #fff; }
.panel-foot { display: flex; align-items: center; gap: 6px; height: 43px; padding: 0 6px 0 31px; }
.panel-foot span { flex: 1; padding-top: 7px; }
.map { flex: 1; min-width: 0; overflow: hidden; }
.map svg { width: 100%; height: 100%; }
.statusbar { flex: none; height: 20px; border-top: 1px solid #d5d5d5; background: #f0f0f0; }
```
